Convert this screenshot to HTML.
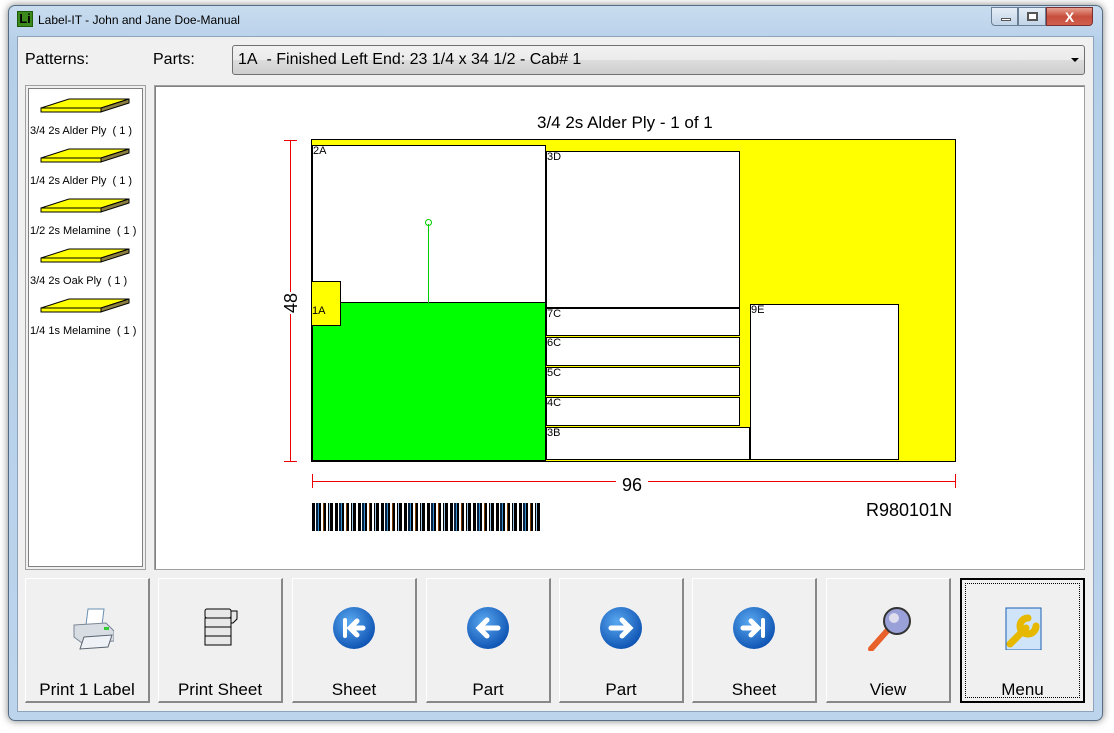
<!DOCTYPE html>
<html><head><meta charset="utf-8"><style>
*{margin:0;padding:0;box-sizing:border-box}
body{width:1114px;height:733px;background:#fff;position:relative;overflow:hidden;font-family:"Liberation Sans",sans-serif}
.a{position:absolute}
.win{left:8px;top:5px;width:1095px;height:716px;border-radius:7px;background:linear-gradient(#c9dcef,#b5cfe9 40px,#bcd4ec);border:1px solid #566d85;box-shadow:0 0 8px rgba(0,0,0,.5)}
.client{left:17px;top:36px;width:1077px;height:676px;background:#f0f0f0;border:1px solid #8ea4bd}
.btn{position:absolute;top:578px;width:125px;height:125px;background:#f0f0f0;border-top:1px solid #fff;border-left:1px solid #fff;border-right:2px solid #888;border-bottom:2px solid #888;font-size:17px;text-align:center}
.btn span{position:absolute;left:0;right:0;top:101px}
.btn svg{position:absolute;left:40px;top:28px}
.lbl{font-size:16px;position:absolute}
.p{position:absolute;background:#fff;border:1.5px solid #000;font-size:11px;line-height:11px;padding-left:0}
.pt{font-size:11px;position:absolute;left:30px;width:115px}
</style></head><body>
<div class="a win"></div>
<div class="a" style="left:17px;top:11px;width:16px;height:16px;background:#3c8a1c;border:1px solid #1d5b08;color:#000;font-weight:bold;font-size:13px;line-height:14px;text-align:center">Li</div>
<div class="a" style="left:38px;top:13px;font-size:12px;color:#000">Label-IT - John and Jane Doe-Manual</div>
<div class="a" style="left:991px;top:7px;width:27px;height:19px;border:1px solid #6a7e95;border-radius:0 0 0 4px;background:linear-gradient(#e4edf6,#c2d4e8)"><div class="a" style="left:9px;top:10px;width:10px;height:3px;background:#fff;border:1px solid #555"></div></div>
<div class="a" style="left:1018px;top:7px;width:28px;height:19px;border:1px solid #6a7e95;background:linear-gradient(#e4edf6,#c2d4e8)"><div class="a" style="left:8px;top:4px;width:11px;height:9px;border:2px solid #555;background:#fff"></div></div>
<div class="a" style="left:1046px;top:7px;width:47px;height:19px;border:1px solid #7a3030;border-radius:0 0 4px 0;background:linear-gradient(#e8a090,#c74e3c 50%,#d06050);color:#fff;font-weight:bold;font-size:14px;text-align:center;line-height:18px">X</div>
<div class="a client"></div>
<div class="lbl" style="left:25px;top:51px">Patterns:</div>
<div class="lbl" style="left:153px;top:51px">Parts:</div>
<div class="a" style="left:232px;top:45px;width:853px;height:30px;border:1px solid #707070;border-radius:3px;background:linear-gradient(#f2f2f2,#ebebeb 50%,#dddddd 50%,#cfcfcf);font-size:16px;line-height:28px;padding-left:5px">1A&nbsp; - Finished Left End: 23 1/4 x 34 1/2 - Cab# 1
<div class="a" style="right:5px;top:12px;border-left:4px solid transparent;border-right:4px solid transparent;border-top:4px solid #000"></div></div>
<div class="a" style="left:25px;top:85px;width:121px;height:485px;background:#fff;border:1px solid #a0a0a0;box-shadow:inset 0 0 0 2px #f0f0f0,inset 0 0 0 3px #808080"></div>
<svg class="a" style="left:25px;top:85px" width="121" height="260">
<g id="sl" stroke="#000" stroke-width="1"><polygon points="16,23 44,14 104,14 76,23" fill="#ff0"/><polygon points="16,23 76,23 76,27 16,27" fill="#ff0"/><polygon points="76,23 104,14 104,18 76,27" fill="#8a7f40"/></g>
<use href="#sl" y="50"/><use href="#sl" y="100"/><use href="#sl" y="150"/><use href="#sl" y="200"/>
</svg>
<div class="pt" style="top:125px">3/4 2s Alder Ply&nbsp; ( 1 )</div>
<div class="pt" style="top:175px">1/4 2s Alder Ply&nbsp; ( 1 )</div>
<div class="pt" style="top:225px">1/2 2s Melamine&nbsp; ( 1 )</div>
<div class="pt" style="top:275px">3/4 2s Oak Ply&nbsp; ( 1 )</div>
<div class="pt" style="top:325px">1/4 1s Melamine&nbsp; ( 1 )</div>
<div class="a" style="left:154px;top:85px;width:931px;height:485px;background:#fff;border:1px solid #a0a0a0;box-shadow:inset 1px 1px 0 #808080"></div>
<div class="a" style="left:537px;top:113px;font-size:17px">3/4 2s Alder Ply - 1 of 1</div>
<div class="a" style="left:311px;top:139px;width:645px;height:323px;background:#ff0;border:1px solid #000"></div>
<div class="p" style="left:312px;top:145px;width:234px;height:158px">2A</div>
<div class="p" style="left:312px;top:302px;width:234px;height:159px;background:#0f0"></div>
<div class="p" style="left:311px;top:281px;width:30px;height:45px;background:#ff0;padding-top:24px">1A</div>
<div class="a" style="left:428px;top:224px;width:1px;height:80px;background:#0c0"></div>
<div class="a" style="left:425px;top:219px;width:7px;height:7px;border:1px solid #0c0;border-radius:50%"></div>
<div class="p" style="left:546px;top:151px;width:194px;height:157px">3D</div>
<div class="p" style="left:546px;top:308px;width:194px;height:28px">7C</div>
<div class="p" style="left:546px;top:337px;width:194px;height:29px">6C</div>
<div class="p" style="left:546px;top:367px;width:194px;height:29px">5C</div>
<div class="p" style="left:546px;top:397px;width:194px;height:29px">4C</div>
<div class="p" style="left:546px;top:427px;width:204px;height:33px">3B</div>
<div class="p" style="left:750px;top:304px;width:149px;height:156px">9E</div>
<div class="a" style="left:290px;top:140px;width:1px;height:321px;background:#e00"></div>
<div class="a" style="left:284px;top:140px;width:13px;height:1px;background:#e00"></div>
<div class="a" style="left:284px;top:461px;width:13px;height:1px;background:#e00"></div>
<div class="a" style="left:280px;top:289px;width:22px;height:28px;background:#fff;font-size:18px;transform:rotate(-90deg);text-align:center;line-height:28px">48</div>
<div class="a" style="left:312px;top:481px;width:643px;height:1px;background:#e00"></div>
<div class="a" style="left:955px;top:474px;width:1px;height:14px;background:#e00"></div>
<div class="a" style="left:312px;top:474px;width:1px;height:14px;background:#e00"></div>
<div class="a" style="left:616px;top:475px;width:32px;background:#fff;font-size:18px;text-align:center">96</div>
<div class="a" style="left:866px;top:500px;font-size:18px">R980101N</div>
<div class="a" style="left:312px;top:503px;width:228px;height:28px;background:repeating-linear-gradient(90deg,#000 0 3px,#fff 3px 4px,#06203f 4px 6px,#3a8fd0 6px 7px,#000 7px 9px,#fff 9px 11px,#7a3a00 11px 12px,#000 12px 14px,#fff 14px 16px,#000 16px 17px,#a0c8e8 17px 18px,#000 18px 21px,#fff 21px 23px)"></div>
<div class="btn" style="left:25px"><svg width="48" height="44"><polygon points="22,2 38,2 36,18 20,18" fill="#fff" stroke="#6a8fb0"/><path d="M8,18 L40,16 L48,24 L48,34 L16,36 L8,30Z" fill="#d8dde4" stroke="#7a8694"/><path d="M18,30 L46,28 L42,40 L14,42Z" fill="#eef1f5" stroke="#5a6470"/><rect x="38" y="20" width="5" height="3" fill="#3c3"/></svg><span>Print 1 Label</span></div>
<div class="btn" style="left:158px"><svg width="48" height="44"><g fill="#e8e8e8" stroke="#000"><rect x="6" y="2" width="26" height="9" rx="2"/><rect x="6" y="11" width="26" height="9"/><rect x="6" y="20" width="26" height="9"/><rect x="6" y="29" width="26" height="9"/><path d="M32,4 h6 v8 l-4,4 h-2z"/></g></svg><span>Print Sheet</span></div>
<div class="btn" style="left:292px"><svg width="48" height="44"><defs><radialGradient id="bg" cx=".4" cy=".35" r=".7"><stop offset="0" stop-color="#5aa8f0"/><stop offset="1" stop-color="#0a4fb0"/></radialGradient></defs><circle cx="21" cy="21" r="21" fill="url(#bg)"/><rect x="10" y="11" width="4" height="20" rx="2" fill="#fff"/><path d="M30,21 H17 M24,14 L17,21 L24,28" stroke="#fff" stroke-width="5" stroke-linecap="round" fill="none"/></svg><span>Sheet</span></div>
<div class="btn" style="left:426px"><svg width="48" height="44"><circle cx="21" cy="21" r="21" fill="url(#bg)"/><path d="M31,21 H12 M20,13 L12,21 L20,29" stroke="#fff" stroke-width="5" stroke-linecap="round" fill="none"/></svg><span>Part</span></div>
<div class="btn" style="left:559px"><svg width="48" height="44"><circle cx="21" cy="21" r="21" fill="url(#bg)"/><path d="M11,21 H30 M22,13 L30,21 L22,29" stroke="#fff" stroke-width="5" stroke-linecap="round" fill="none"/></svg><span>Part</span></div>
<div class="btn" style="left:692px"><svg width="48" height="44"><circle cx="21" cy="21" r="21" fill="url(#bg)"/><rect x="28" y="11" width="4" height="20" rx="2" fill="#fff"/><path d="M10,21 H24 M18,14 L25,21 L18,28" stroke="#fff" stroke-width="5" stroke-linecap="round" fill="none"/></svg><span>Sheet</span></div>
<div class="btn" style="left:826px"><svg width="48" height="44"><path d="M4,42 L20,24" stroke="#e8602a" stroke-width="6" stroke-linecap="round"/><circle cx="30" cy="14" r="13" fill="#9aa0d8" stroke="#333" stroke-width="2"/><circle cx="27" cy="11" r="5" fill="#dde"/></svg><span>View</span></div>
<div class="btn" style="left:960px;border:2px solid #000"><div class="a" style="left:3px;top:3px;right:3px;bottom:3px;border:1px dotted #000"></div><svg width="48" height="44" style="left:42px;top:26px"><rect x="2" y="2" width="35" height="42" fill="#cfe4f8" stroke="#1a5fb4"/><path d="M6,38 L22,22 M24,12 a8,8 0 1 0 8,8" stroke="#e6b800" stroke-width="7" stroke-linecap="round" fill="none"/></svg><span style="top:100px">Menu</span></div>
</body></html>
